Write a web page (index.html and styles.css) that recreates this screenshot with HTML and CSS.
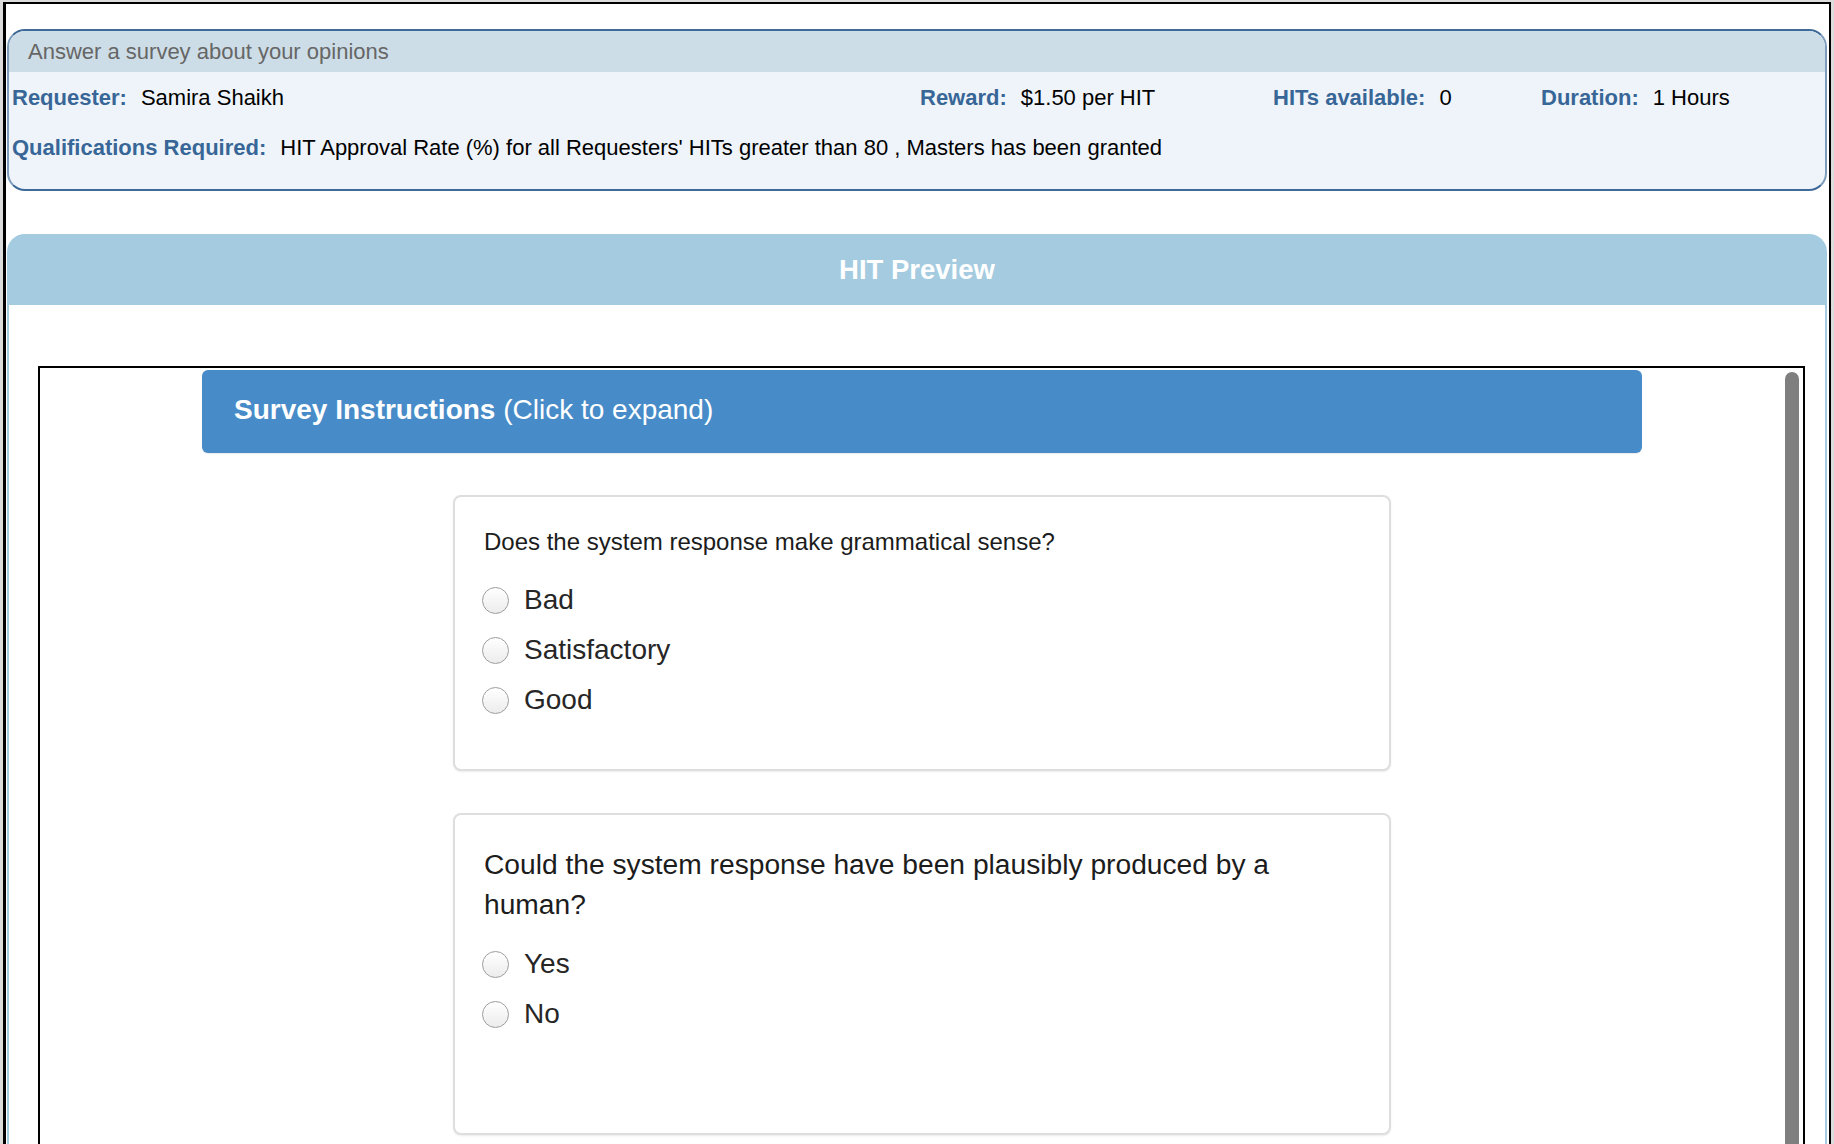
FILE: index.html
```html
<!DOCTYPE html>
<html lang="en">
<head>
<meta charset="utf-8">
<title>HIT Preview</title>
<link rel="stylesheet" href="styles.css">
</head>
<body>
<div class="frame">
  <div class="summary">
    <div class="summary-head">Answer a survey about your opinions</div>
    <div class="summary-body">
      <div class="info-row">
        <div class="field"><span class="label">Requester:</span><span class="value">Samira Shaikh</span></div>
        <div class="field"><span class="label">Reward:</span><span class="value">$1.50 per HIT</span></div>
        <div class="field"><span class="label">HITs available:</span><span class="value">0</span></div>
        <div class="field"><span class="label">Duration:</span><span class="value">1 Hours</span></div>
      </div>
      <div class="info-row-single">
        <span class="label">Qualifications Required:</span><span class="value">HIT Approval Rate (%) for all Requesters' HITs greater than 80 , Masters has been granted</span>
      </div>
    </div>
  </div>

  <div class="preview">
    <div class="preview-band">HIT Preview</div>
    <div class="preview-body">
      <div class="hit-frame">
        <div class="hit-content">
          <div class="instructions"><b>Survey Instructions</b> (Click to expand)</div>

          <div class="card card-one">
            <p class="question q-small">Does the system response make grammatical sense?</p>
            <div class="options">
              <label class="option"><input type="radio" name="q1"><span>Bad</span></label>
              <label class="option"><input type="radio" name="q1"><span>Satisfactory</span></label>
              <label class="option"><input type="radio" name="q1"><span>Good</span></label>
            </div>
          </div>

          <div class="card card-two">
            <p class="question q-large">Could the system response have been plausibly produced by a human?</p>
            <div class="options">
              <label class="option"><input type="radio" name="q2"><span>Yes</span></label>
              <label class="option"><input type="radio" name="q2"><span>No</span></label>
            </div>
          </div>
        </div>
        <div class="scroll-thumb"></div>
      </div>
    </div>
  </div>
</div>
</body>
</html>
```

FILE: styles.css
```css
html, body {
  margin: 0;
  padding: 0;
  overflow: hidden;
  height: 100%;
}

body {
  background: #dcdcdc;
  font-family: "Liberation Sans", Arial, Helvetica, sans-serif;
}

.frame {
  box-sizing: border-box;
  width: 1828px;
  min-height: 1300px;
  margin: 2px 0 0 3px;
  background: #ffffff;
  border-top: 2px solid #000;
  border-left: 3px solid #000;
  border-right: 2px solid #000;
  padding: 25px 2px 0 1px;
}

/* ---------- summary box ---------- */
.summary {
  border: 2px solid #3d6a99;
  border-left-color: #7f9dbb;
  border-right-color: #7f9dbb;
  border-radius: 18px;
  overflow: hidden;
  background: #eef4f9;
}

.summary-head {
  height: 41px;
  line-height: 41px;
  background: #cddde7;
  color: #666666;
  font-size: 22px;
  padding-left: 19px;
}

.summary-body {
  padding: 11px 0 26px 3px;
  font-size: 22px;
  line-height: 30px;
}

.info-row {
  display: grid;
  grid-template-columns: 908px 353px 268px 1fr;
}

.info-row-single {
  margin-top: 20px;
}

.label {
  font-weight: bold;
  color: #376697;
  margin-right: 14px;
}

.value {
  color: #000;
}

/* ---------- HIT preview ---------- */
.preview-band {
  margin-top: 43px;
  height: 71px;
  line-height: 71px;
  background: #a4cbe0;
  border-radius: 18px 18px 0 0;
  color: #ffffff;
  font-size: 27.5px;
  font-weight: bold;
  text-align: center;
}

.preview-body {
  border-left: 2px solid #a4cbe0;
  border-right: 2px solid #a4cbe0;
  padding: 61px 20px 0 29px;
}

.hit-frame {
  position: relative;
  box-sizing: border-box;
  width: 1767px;
  height: 900px;
  border: 2px solid #000;
  overflow: hidden;
  background: #fff;
}

.scroll-thumb {
  position: absolute;
  top: 4px;
  right: 4px;
  width: 14px;
  height: 1000px;
  border-radius: 7px;
  background: #7f7f7f;
}

.hit-content {
  width: 1440px;
  margin-left: 162px;
  padding-top: 2px;
}

.instructions {
  height: 83px;
  line-height: 80px;
  box-sizing: border-box;
  padding-left: 32px;
  background: #478cc8;
  border-radius: 6px;
  color: #ffffff;
  font-size: 28px;
  box-shadow: 0 1px 1px rgba(0, 0, 0, 0.08);
}

.instructions b {
  font-weight: bold;
}

/* ---------- cards ---------- */
.card {
  box-sizing: border-box;
  width: 938px;
  margin: 42px auto 0;
  border: 2px solid #dedede;
  border-radius: 8px;
  box-shadow: 0 1px 2px rgba(0, 0, 0, 0.08);
  background: #fff;
  padding-left: 29px;
  padding-right: 29px;
}

.card-one {
  height: 276px;
  padding-top: 28px;
}

.card-two {
  height: 322px;
  padding-top: 29px;
}

.question {
  margin: 0;
  color: #1c1c1c;
}

.q-small {
  font-size: 24px;
  line-height: 34px;
  margin-bottom: 16px;
}

.q-large {
  font-size: 28.2px;
  line-height: 40px;
  margin-bottom: 15px;
  padding-right: 40px;
}

.options {
  display: flex;
  flex-direction: column;
}

.option {
  display: flex;
  align-items: center;
  height: 50px;
  font-size: 28px;
  color: #262626;
}

.option input {
  appearance: none;
  -webkit-appearance: none;
  box-sizing: border-box;
  width: 27px;
  height: 27px;
  margin: 0 15px 0 -2px;
  border: 1px solid #9d9d9d;
  border-radius: 50%;
  background: linear-gradient(#ffffff, #ececec);
  box-shadow: inset 0 1px 1px rgba(255, 255, 255, 0.9);
}
```
